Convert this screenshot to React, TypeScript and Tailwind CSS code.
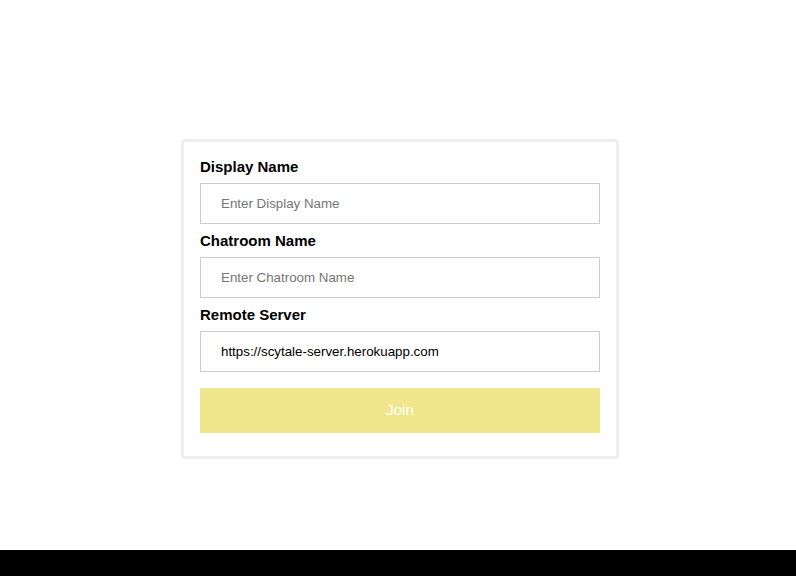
export default function App() {
  return (
    <div className="flex h-[576px] w-full flex-col bg-white font-['Liberation_Sans',Arial,sans-serif]">
      <div className="flex flex-1 items-start justify-center pl-[4px] pt-[139px]">
        <form
          className="w-[438px] rounded-[4px] border-[3px] border-[#eeeeee] bg-white px-4 pb-[23px] pt-[16px]"
          onSubmit={(e) => e.preventDefault()}
        >
          <label className="block text-[15px] font-bold leading-[17px] text-black">
            Display Name
          </label>
          <input
            type="text"
            placeholder="Enter Display Name"
            className="mt-[8px] block h-[41px] w-full border border-[#cccccc] px-5 text-[13.333px] text-black outline-none placeholder:text-[#757575]"
          />
          <label className="mt-[8px] block text-[15px] font-bold leading-[17px] text-black">
            Chatroom Name
          </label>
          <input
            type="text"
            placeholder="Enter Chatroom Name"
            className="mt-[8px] block h-[41px] w-full border border-[#cccccc] px-5 text-[13.333px] text-black outline-none placeholder:text-[#757575]"
          />
          <label className="mt-[8px] block text-[15px] font-bold leading-[17px] text-black">
            Remote Server
          </label>
          <input
            type="text"
            defaultValue="https://scytale-server.herokuapp.com"
            className="mt-[8px] block h-[41px] w-full border border-[#cccccc] px-5 text-[13.333px] text-black outline-none"
          />
          <button
            type="submit"
            className="mt-4 block h-[45px] w-full bg-[#f0e68c] text-[15px] text-white"
          >
            Join
          </button>
        </form>
      </div>
      <div className="h-[26px] w-full bg-black" />
    </div>
  );
}
